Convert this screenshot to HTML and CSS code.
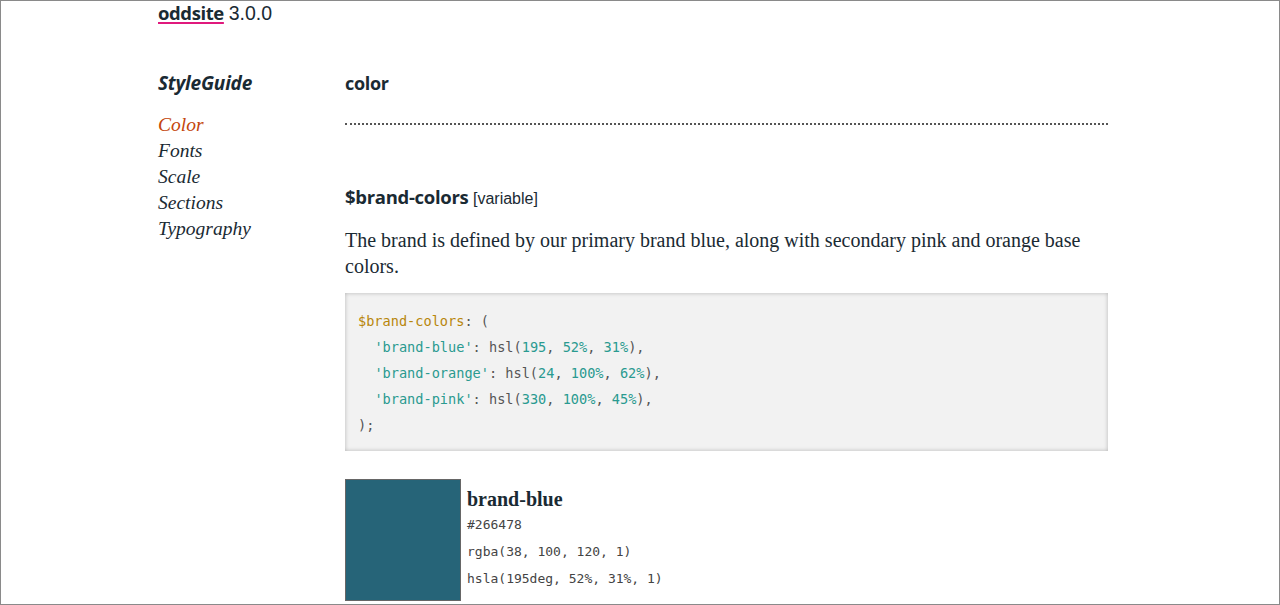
FILE: index.html
```html
<!DOCTYPE html>
<html>
<head>
<meta charset="utf-8">
<link rel="stylesheet" href="styles.css">
</head>
<body>
<div class="frame"></div>
<header class="top">
  <a class="brand" href="#">oddsite</a> <span class="version">3.0.0</span>
</header>
<div class="layout">
  <nav class="side">
    <h2 class="side-title">StyleGuide</h2>
    <ul class="side-list">
      <li><a class="active" href="#">Color</a></li>
      <li><a href="#">Fonts</a></li>
      <li><a href="#">Scale</a></li>
      <li><a href="#">Sections</a></li>
      <li><a href="#">Typography</a></li>
    </ul>
  </nav>
  <main class="main">
    <h1 class="page-title">color</h1>
    <hr class="rule">
    <h3 class="item-title">$brand-colors <span class="item-type">[variable]</span></h3>
    <p class="desc">The brand is defined by our primary brand blue, along with secondary pink and orange base colors.</p>
    <pre class="code"><span class="c-var">$brand-colors</span><span class="c-p">: (</span>
  <span class="c-str">'brand-blue'</span><span class="c-p">: hsl(</span><span class="c-num">195</span><span class="c-p">, </span><span class="c-num">52%</span><span class="c-p">, </span><span class="c-num">31%</span><span class="c-p">),</span>
  <span class="c-str">'brand-orange'</span><span class="c-p">: hsl(</span><span class="c-num">24</span><span class="c-p">, </span><span class="c-num">100%</span><span class="c-p">, </span><span class="c-num">62%</span><span class="c-p">),</span>
  <span class="c-str">'brand-pink'</span><span class="c-p">: hsl(</span><span class="c-num">330</span><span class="c-p">, </span><span class="c-num">100%</span><span class="c-p">, </span><span class="c-num">45%</span><span class="c-p">),</span>
<span class="c-p">);</span></pre>
    <div class="swatch">
      <div class="swatch-chip" style="background:#266478"></div>
      <div class="swatch-info">
        <div class="swatch-name">brand-blue</div>
        <div class="swatch-val">#266478</div>
        <div class="swatch-val">rgba(38, 100, 120, 1)</div>
        <div class="swatch-val">hsla(195deg, 52%, 31%, 1)</div>
      </div>
    </div>
  </main>
</div>
</body>
</html>
```
FILE: styles.css
```css
html, body {
  margin: 0;
  padding: 0;
  background: #fff;
  color: #1a2a33;
}
body {
  font-family: "Liberation Serif", serif;
}
.frame {
  position: fixed;
  inset: 0;
  border: 1px solid #8a8a8a;
  pointer-events: none;
  z-index: 10;
}
.top {
  padding: 1px 0 0 158px;
  height: 41px;
  font-family: "Open Sans", sans-serif;
  font-size: 18.5px;
  line-height: 24px;
}
.brand {
  font-weight: 700;
  color: #1a2a33;
  text-decoration: underline;
  text-decoration-color: #e0197d;
  text-decoration-thickness: 2px;
  text-underline-offset: 2px;
  letter-spacing: -0.4px;
}
.version {
  font-family: "Liberation Sans", sans-serif;
  font-size: 19.5px;
  color: #1a2a33;
}
.layout {
  display: flex;
  padding-left: 158px;
  padding-top: 29px;
}
.side {
  width: 187px;
  flex: none;
}
.side-title {
  margin: 0;
  font-family: "Open Sans", sans-serif;
  font-weight: 700;
  font-style: italic;
  font-size: 19px;
  line-height: 24px;
  letter-spacing: -0.2px;
}
.side-list {
  list-style: none;
  margin: 17px 0 0;
  padding: 0;
}
.side-list li {
  font-style: italic;
  font-size: 19.5px;
  line-height: 26px;
}
.side-list a {
  color: #1a2a33;
  text-decoration: none;
}
.side-list a.active {
  color: #c4460c;
}
.main {
  width: 763px;
  flex: none;
}
.page-title {
  margin: 0;
  font-family: "Open Sans", sans-serif;
  font-weight: 700;
  font-size: 18px;
  line-height: 24px;
  letter-spacing: -0.3px;
}
.rule {
  margin: 28px 0 0;
  border: 0;
  border-top: 2px dotted #555;
  height: 0;
}
.item-title {
  margin: 60px 0 0;
  font-family: "Open Sans", sans-serif;
  font-weight: 700;
  font-size: 18.5px;
  line-height: 24px;
  letter-spacing: -0.3px;
}
.item-type {
  font-family: "Liberation Sans", sans-serif;
  font-weight: 400;
  font-size: 16px;
  letter-spacing: 0;
}
.desc {
  margin: 16px 0 0;
  font-size: 20px;
  line-height: 26px;
}
.code {
  margin: 14px 0 0;
  padding: 15px 13px 13px;
  background: #f2f2f2;
  box-shadow: inset 0 0 4px rgba(0,0,0,0.25);
  font-family: "DejaVu Sans Mono", monospace;
  font-size: 13.6px;
  line-height: 26px;
  color: #555;
}
.c-var { color: #b8860b; }
.c-str { color: #2a9a90; }
.c-num { color: #2a9a90; }
.c-p { color: #555; }
.swatch {
  display: flex;
  margin-top: 28px;
  gap: 6px;
}
.swatch-chip {
  width: 114px;
  height: 120px;
  border: 1px solid #666;
  flex: none;
}
.swatch-info {
  padding-top: 8px;
}
.swatch-name {
  font-weight: 700;
  font-size: 20px;
  line-height: 24px;
}
.swatch-val {
  font-family: "DejaVu Sans Mono", monospace;
  font-size: 13px;
  line-height: 27px;
  color: #444;
}
```
